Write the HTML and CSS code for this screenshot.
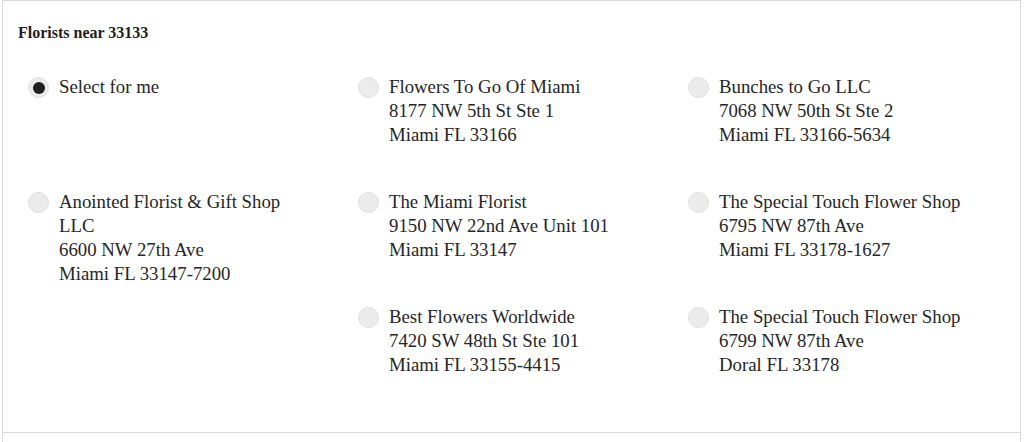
FILE: index.html
```html
<!DOCTYPE html>
<html>
<head>
<meta charset="utf-8">
<link rel="stylesheet" href="styles.css">
</head>
<body>
<div class="panel">
  <section class="florists">
    <h2 class="title">Florists near 33133</h2>
    <div class="grid">
      <label class="option">
        <span class="radio checked"></span>
        <span class="text">Select for me</span>
      </label>
      <label class="option">
        <span class="radio"></span>
        <span class="text">Flowers To Go Of Miami<br>8177 NW 5th St Ste 1<br>Miami FL 33166</span>
      </label>
      <label class="option">
        <span class="radio"></span>
        <span class="text">Bunches to Go LLC<br>7068 NW 50th St Ste 2<br>Miami FL 33166-5634</span>
      </label>
      <label class="option">
        <span class="radio"></span>
        <span class="text">Anointed Florist &amp; Gift Shop LLC<br>6600 NW 27th Ave<br>Miami FL 33147-7200</span>
      </label>
      <label class="option">
        <span class="radio"></span>
        <span class="text">The Miami Florist<br>9150 NW 22nd Ave Unit 101<br>Miami FL 33147</span>
      </label>
      <label class="option">
        <span class="radio"></span>
        <span class="text">The Special Touch Flower Shop<br>6795 NW 87th Ave<br>Miami FL 33178-1627</span>
      </label>
      <label class="option col-2">
        <span class="radio"></span>
        <span class="text">Best Flowers Worldwide<br>7420 SW 48th St Ste 101<br>Miami FL 33155-4415</span>
      </label>
      <label class="option">
        <span class="radio"></span>
        <span class="text">The Special Touch Flower Shop<br>6799 NW 87th Ave<br>Doral FL 33178</span>
      </label>
    </div>
  </section>
  <div class="after"></div>
</div>
</body>
</html>
```
FILE: styles.css
```css
html, body {
  margin: 0;
  padding: 0;
  background: #ffffff;
}
body {
  font-family: "Liberation Serif", "Times New Roman", serif;
  color: #262626;
}
.panel {
  margin-left: 2px;
  width: 1017px;
  border: 1px solid #d9d9d9;
  border-bottom: none;
}
.florists {
  padding: 22px 0 12px 15px;
  border-bottom: 1px solid #d9d9d9;
}
.title {
  margin: 0;
  font-size: 16px;
  line-height: 20px;
  font-weight: bold;
  color: #1e1e1e;
}
.grid {
  margin-top: 32px;
  padding-left: 10px;
  display: grid;
  grid-template-columns: 330px 330px 330px;
  grid-auto-rows: 115px;
}
.option {
  display: flex;
  align-items: flex-start;
  gap: 10px;
}
.col-2 {
  grid-column: 2;
}
.radio {
  flex: none;
  width: 21px;
  height: 21px;
  margin-top: 2px;
  border-radius: 50%;
  background: #ebebeb;
  box-sizing: border-box;
  border: 1px solid #e0e0e0;
  display: flex;
  align-items: center;
  justify-content: center;
}
.radio.checked::after {
  content: "";
  width: 12px;
  height: 12px;
  border-radius: 50%;
  background: #1f1f1f;
}
.text {
  width: 248px;
  font-size: 18.8px;
  line-height: 24px;
}
.after {
  height: 20px;
}
```
